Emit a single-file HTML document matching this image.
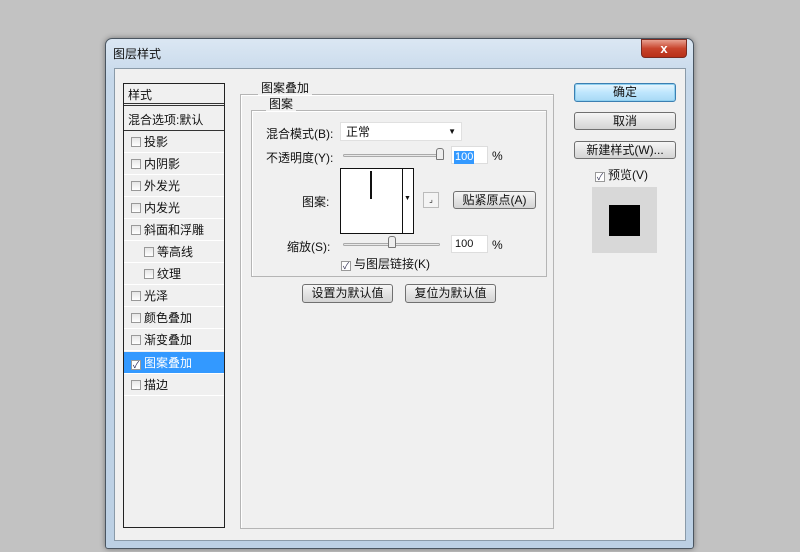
<!DOCTYPE html>
<html><head><meta charset="utf-8"><style>
*{box-sizing:border-box;margin:0;padding:0}
body{width:800px;height:552px;background:#c2c2c2;position:relative;overflow:hidden;font-family:"Liberation Sans","Noto Sans CJK SC",sans-serif;font-size:12px;color:#111}
.a{position:absolute}
.win{left:105px;top:38px;width:589px;height:511px;border-radius:7px 7px 3px 3px;background:linear-gradient(#dbe7f3,#c6d8ea 40px,#bcd0e4);border:1px solid #4a5560;box-shadow:0 0 6px rgba(0,0,0,.4)}
.client{left:114px;top:68px;width:572px;height:473px;background:#f0f0f0;border:1px solid #8a9aa8}
.cb{display:inline-block;width:10px;height:10px;border:1px solid #999;background:linear-gradient(#e6e6e6,#fff);vertical-align:-1px;margin-right:3px}
.item{left:124px;width:100px;height:22px;line-height:22px;padding-left:7px;border-bottom:1px solid #fff;font-size:12px}
.btn{border:1px solid #707070;border-radius:3px;background:linear-gradient(#f6f6f6,#e4e4e4 50%,#d4d4d4);text-align:center;font-size:12px;line-height:16px}
.fs{border:1px solid #b5b5b5;box-shadow:1px 1px 0 #fff inset}
.lg{background:#f0f0f0;padding:0 3px;font-size:12px;line-height:14px}
</style></head><body>
<div class="a win"></div>
<div class="a" style="left:113px;top:45px;font-size:12px">图层样式</div>
<div class="a" style="left:641px;top:39px;width:46px;height:19px;border:1px solid #7a2a20;border-radius:0 0 4px 4px;background:linear-gradient(#e8a090,#c8442c 50%,#b83018);color:#fff;font-weight:bold;text-align:center;line-height:17px;font-size:13px">x</div>
<div class="a client"></div>

<!-- left list -->
<div class="a" style="left:123px;top:83px;width:102px;height:445px;border:1px solid #222;background:#f0f0f0"></div>
<div class="a" style="left:124px;top:84px;width:100px;height:22px;border-bottom:3px double #333;line-height:22px;padding-left:4px">样式</div>
<div class="a" style="left:124px;top:109px;width:100px;height:22px;border-bottom:1px solid #333;line-height:22px;padding-left:4px">混合选项:默认</div>
<div class="a item" style="top:131px"><span class="cb"></span>投影</div>
<div class="a item" style="top:153px"><span class="cb"></span>内阴影</div>
<div class="a item" style="top:175px"><span class="cb"></span>外发光</div>
<div class="a item" style="top:197px"><span class="cb"></span>内发光</div>
<div class="a item" style="top:219px"><span class="cb"></span>斜面和浮雕</div>
<div class="a item" style="top:241px;padding-left:20px"><span class="cb"></span>等高线</div>
<div class="a item" style="top:263px;padding-left:20px"><span class="cb"></span>纹理</div>
<div class="a item" style="top:285px"><span class="cb"></span>光泽</div>
<div class="a item" style="top:307px"><span class="cb"></span>颜色叠加</div>
<div class="a item" style="top:329px"><span class="cb"></span>渐变叠加</div>
<div class="a item" style="top:352px;background:#3399ff;color:#fff"><span class="cb" style="background:#fff;color:#225;font-size:9px;line-height:8px;text-align:center">✓</span>图案叠加</div>
<div class="a item" style="top:374px"><span class="cb"></span>描边</div>

<!-- main fieldset -->
<div class="a fs" style="left:240px;top:94px;width:314px;height:435px"></div>
<div class="a lg" style="left:258px;top:81px">图案叠加</div>
<div class="a fs" style="left:251px;top:110px;width:296px;height:167px"></div>
<div class="a lg" style="left:266px;top:97px">图案</div>

<div class="a" style="left:266px;top:125px">混合模式(B):</div>
<div class="a" style="left:340px;top:122px;width:122px;height:19px;background:#fff;border:1px solid #e0e0e0;padding-left:5px;line-height:18px">正常<span style="position:absolute;right:5px;top:0;font-size:8px">▼</span></div>
<div class="a" style="left:266px;top:149px">不透明度(Y):</div>
<div class="a" style="left:343px;top:154px;width:97px;height:3px;border:1px solid #aaa;border-radius:2px;background:#e8e8e8"></div>
<div class="a" style="left:436px;top:148px;width:8px;height:12px;border:1px solid #777;border-radius:3px 3px 1px 1px;background:#eee"></div>
<div class="a" style="left:451px;top:146px;width:37px;height:18px;background:#fff;border:1px solid #ddd;padding:2px"><span style="background:#3399ff;color:#fff;font-size:11px;line-height:13px;display:inline-block;padding:0 1px">100</span></div>
<div class="a" style="left:492px;top:149px">%</div>

<div class="a" style="left:302px;top:193px">图案:</div>
<div class="a" style="left:340px;top:168px;width:74px;height:66px;border:1px solid #111;background:#fff"></div>
<div class="a" style="left:370px;top:171px;width:2px;height:28px;background:#111"></div>
<div class="a" style="left:402px;top:168px;width:1px;height:66px;background:#111"></div>
<div class="a" style="left:404px;top:195px;font-size:7px">▼</div>
<div class="a" style="left:423px;top:192px;width:16px;height:16px;border:1px solid #bbb;background:#f4f4f4;font-size:8px;text-align:center;line-height:14px">⌟</div>
<div class="a btn" style="left:453px;top:191px;width:83px;height:18px">贴紧原点(A)</div>

<div class="a" style="left:287px;top:238px">缩放(S):</div>
<div class="a" style="left:343px;top:243px;width:97px;height:3px;border:1px solid #aaa;border-radius:2px;background:#e8e8e8"></div>
<div class="a" style="left:388px;top:236px;width:8px;height:12px;border:1px solid #777;border-radius:3px 3px 1px 1px;background:#eee"></div>
<div class="a" style="left:451px;top:235px;width:37px;height:18px;background:#fff;border:1px solid #ddd;padding-left:3px;line-height:17px;font-size:11px">100</div>
<div class="a" style="left:492px;top:238px">%</div>
<div class="a" style="left:341px;top:255px"><span class="cb" style="background:#fff;color:#335;font-size:9px;line-height:8px;text-align:center">✓</span>与图层链接(K)</div>

<div class="a btn" style="left:302px;top:284px;width:91px;height:19px">设置为默认值</div>
<div class="a btn" style="left:405px;top:284px;width:91px;height:19px">复位为默认值</div>

<!-- right -->
<div class="a btn" style="left:574px;top:83px;width:102px;height:19px;border-color:#3c7fb1;background:linear-gradient(#eaf6fd,#bee6fd 50%,#a7d9f5);box-shadow:0 0 0 1px #8fd0f0 inset">确定</div>
<div class="a btn" style="left:574px;top:112px;width:102px;height:18px">取消</div>
<div class="a btn" style="left:574px;top:141px;width:102px;height:18px">新建样式(W)...</div>
<div class="a" style="left:595px;top:166px"><span class="cb" style="background:#fff;color:#335;font-size:9px;line-height:8px;text-align:center">✓</span>预览(V)</div>
<div class="a" style="left:592px;top:187px;width:65px;height:66px;background:#d8d8d8"></div>
<div class="a" style="left:609px;top:205px;width:31px;height:31px;background:#000"></div>
</body></html>
